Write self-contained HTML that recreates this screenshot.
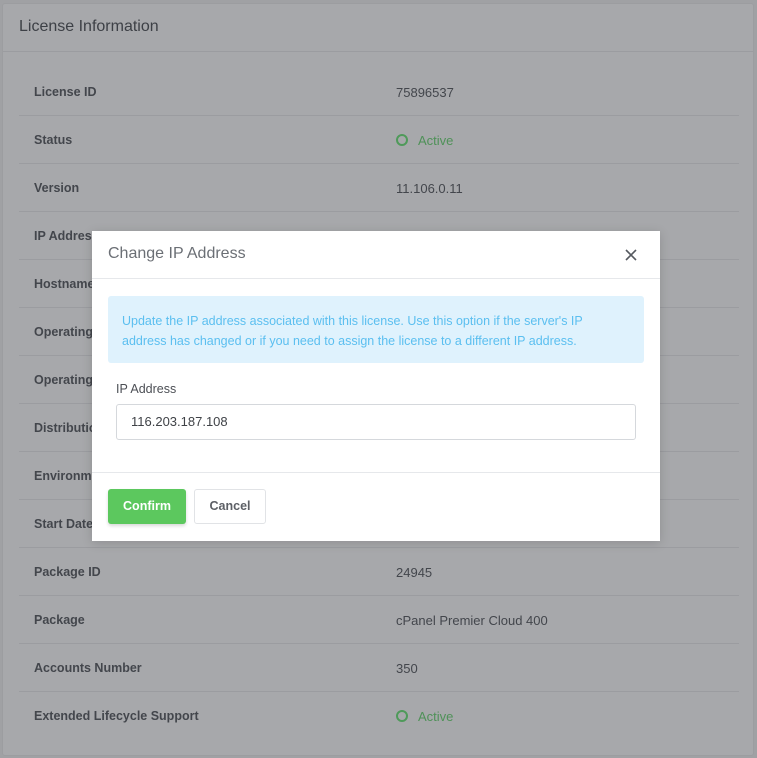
<!DOCTYPE html>
<html><head><meta charset="utf-8"><style>
*{box-sizing:border-box;margin:0;padding:0}
body{width:757px;height:758px;background:#a0a1a4;font-family:"Liberation Sans",sans-serif;position:relative;overflow:hidden}
.card{position:absolute;left:2px;top:3px;width:752px;height:753px;background:#a7a8ab;border:1px solid #9c9da0;border-radius:3px}
.ch{height:48px;border-bottom:1px solid #9b9ca0;padding:14px 16px;font-size:16px;color:#3d4046}
.rows{position:absolute;left:16px;right:14px;top:64px}
.row{height:48px;border-bottom:1px solid #9b9ca0;position:relative;font-size:13px}
.row:last-child{border-bottom:none}
.row .l{position:absolute;left:15px;top:17px;color:#43464c;font-weight:bold;font-size:12.5px}
.row .v{position:absolute;left:377px;top:17px;color:#43464c}
.row .act{color:#4f9158}
.ring{display:inline-block;width:12px;height:12px;border:2px solid #4f9a5a;border-radius:50%;vertical-align:-1px;margin-right:10px}
.modal{position:absolute;left:92px;top:231px;width:568px;height:310px;background:#fff;box-shadow:0 2px 10px rgba(0,0,0,.15)}
.mh{height:48px;border-bottom:1px solid #e6e8eb;padding:14px 16px;font-size:16px;color:#6b6f75;position:relative}
.x{position:absolute;right:22px;top:17px}
.alert{position:absolute;left:16px;top:65px;width:536px;height:67px;background:#dff2fd;border-radius:3px;padding:15px 14px;color:#5bbff0;font-size:12.5px;line-height:20px}
.lab{position:absolute;left:24px;top:151px;font-size:12.5px;color:#4c4f55}
.inp{position:absolute;left:24px;top:173px;width:520px;height:36px;border:1px solid #d5d8dc;border-radius:3px;padding:9px 14px;font-size:13px;color:#3f4247}
.mf{position:absolute;left:0;right:0;top:241px;border-top:1px solid #e6e8eb}
.b1{position:absolute;left:16px;top:258px;width:78px;height:35px;background:#5cc85e;border-radius:3px;color:#fff;font-weight:bold;font-size:12.5px;text-align:center;line-height:35px;box-shadow:0 2px 3px rgba(0,0,0,.15)}
.b2{position:absolute;left:102px;top:258px;width:72px;height:35px;border:1px solid #e1e3e6;border-radius:3px;color:#5d6066;font-weight:bold;font-size:12.5px;text-align:center;line-height:33px}
</style></head><body>
<div class="card">
<div class="ch">License Information</div>
<div class="rows">
<div class="row"><span class="l">License ID</span><span class="v">75896537</span></div>
<div class="row"><span class="l">Status</span><span class="v act"><span class="ring"></span>Active</span></div>
<div class="row"><span class="l">Version</span><span class="v">11.106.0.11</span></div>
<div class="row"><span class="l">IP Address</span><span class="v"></span></div>
<div class="row"><span class="l">Hostname</span></div>
<div class="row"><span class="l">Operating System</span></div>
<div class="row"><span class="l">Operating System</span></div>
<div class="row"><span class="l">Distribution</span></div>
<div class="row"><span class="l">Environment</span></div>
<div class="row"><span class="l">Start Date</span></div>
<div class="row"><span class="l">Package ID</span><span class="v">24945</span></div>
<div class="row"><span class="l">Package</span><span class="v">cPanel Premier Cloud 400</span></div>
<div class="row"><span class="l">Accounts Number</span><span class="v">350</span></div>
<div class="row"><span class="l">Extended Lifecycle Support</span><span class="v act"><span class="ring"></span>Active</span></div>
</div>
</div>
<div class="modal">
<div class="mh">Change IP Address<svg class="x" width="14" height="14" viewBox="0 0 14 14"><path d="M2 2L12 12M12 2L2 12" stroke="#55595f" stroke-width="1.6"/></svg></div>
<div class="alert">Update the IP address associated with this license. Use this option if the server's IP address has changed or if you need to assign the license to a different IP address.</div>
<div class="lab">IP Address</div>
<div class="inp">116.203.187.108</div>
<div class="mf"></div>
<div class="b1">Confirm</div>
<div class="b2">Cancel</div>
</div>
</body></html>
